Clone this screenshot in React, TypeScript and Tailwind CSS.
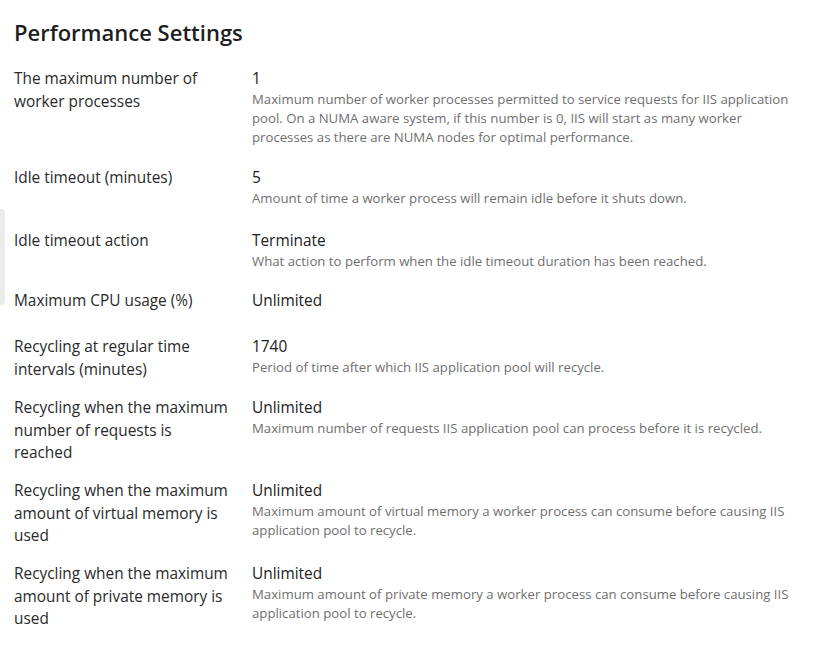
import React from "react";

type Row = { label: string; value: string; desc?: string; pb: string };

const rows: Row[] = [
  {
    label: "The maximum number of worker processes",
    value: "1",
    desc: "Maximum number of worker processes permitted to service requests for IIS application pool. On a NUMA aware system, if this number is 0, IIS will start as many worker processes as there are NUMA nodes for optimal performance.",
    pb: "pb-[20px]",
  },
  {
    label: "Idle timeout (minutes)",
    value: "5",
    desc: "Amount of time a worker process will remain idle before it shuts down.",
    pb: "pb-[22px]",
  },
  {
    label: "Idle timeout action",
    value: "Terminate",
    desc: "What action to perform when the idle timeout duration has been reached.",
    pb: "pb-[19px]",
  },
  { label: "Maximum CPU usage (%)", value: "Unlimited", pb: "pb-[24px]" },
  {
    label: "Recycling at regular time intervals (minutes)",
    value: "1740",
    desc: "Period of time after which IIS application pool will recycle.",
    pb: "pb-[20px]",
  },
  {
    label: "Recycling when the maximum number of requests is reached",
    value: "Unlimited",
    desc: "Maximum number of requests IIS application pool can process before it is recycled.",
    pb: "pb-[20px]",
  },
  {
    label: "Recycling when the maximum amount of virtual memory is used",
    value: "Unlimited",
    desc: "Maximum amount of virtual memory a worker process can consume before causing IIS application pool to recycle.",
    pb: "pb-[20px]",
  },
  {
    label: "Recycling when the maximum amount of private memory is used",
    value: "Unlimited",
    desc: "Maximum amount of private memory a worker process can consume before causing IIS application pool to recycle.",
    pb: "pb-[20px]",
  },
];

export default function App() {
  return (
    <div
      className="relative min-h-[647px] w-[814px] bg-white px-[14px] pt-[17px]"
      style={{ fontFamily: '"Open Sans", "Noto Sans", sans-serif' }}
    >
      <div className="absolute left-0 top-[209px] h-[96px] w-[5px] rounded-r-[4px] bg-[#ebebeb]" />
      <h1 className="mb-[21px] text-[22px] font-semibold leading-[30px] text-[#1e1e1e]">
        Performance Settings
      </h1>
      <div className="flex flex-col">
        {rows.map((r, i) => (
          <div key={i} className="flex items-start gap-[22px]">
            <div className="w-[216px] shrink-0 pb-[15.5px] text-[15.4px] leading-[22.5px] text-[#2a2a2a]">
              {r.label}
            </div>
            <div className={"w-[548px] " + r.pb}>
              <div className="text-[15.4px] leading-[22px] text-[#222]">{r.value}</div>
              {r.desc && (
                <div className="text-[13.2px] leading-[19px] text-[#6f6f6f]">{r.desc}</div>
              )}
            </div>
          </div>
        ))}
      </div>
    </div>
  );
}
